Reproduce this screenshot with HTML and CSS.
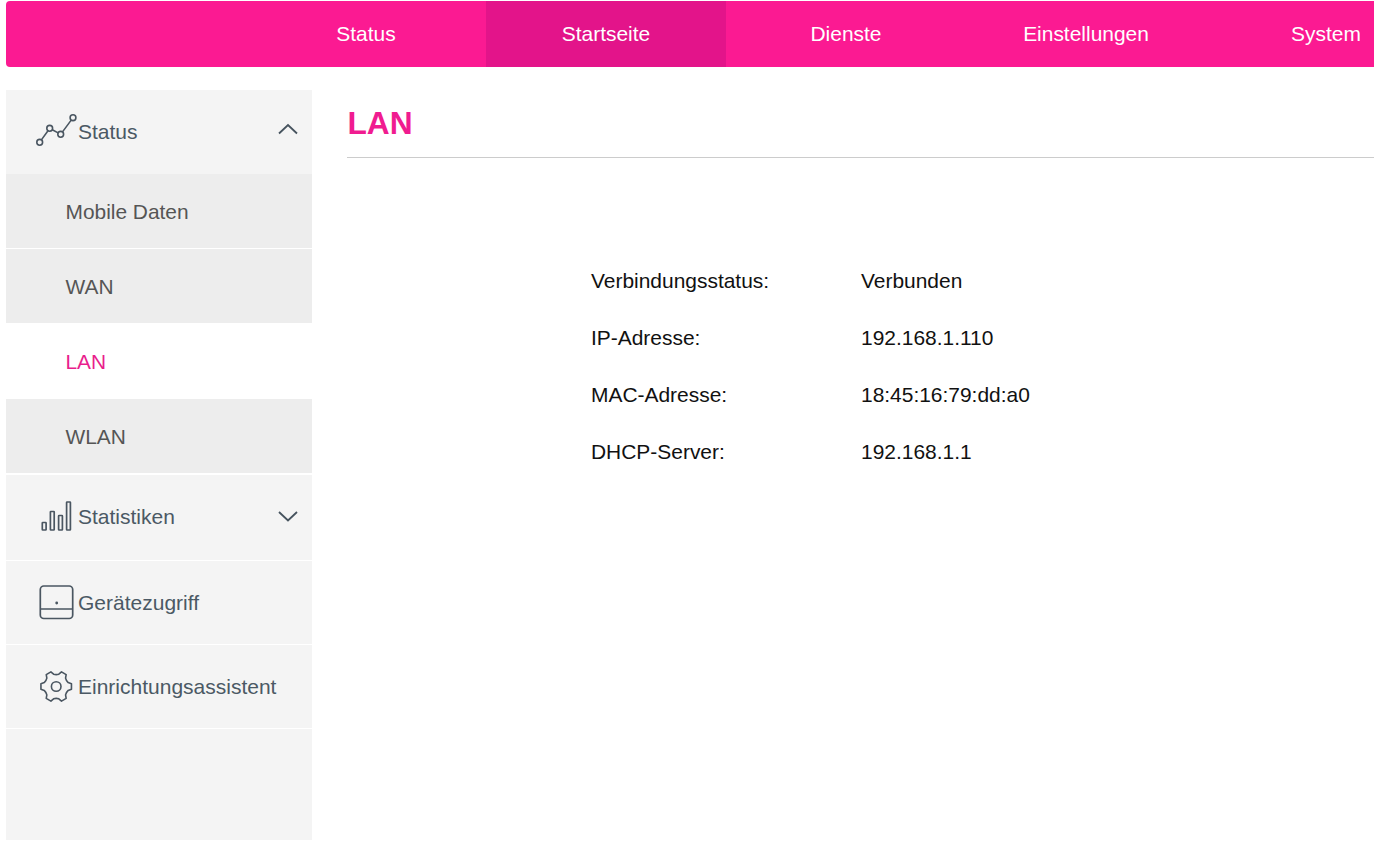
FILE: index.html
```html
<!DOCTYPE html>
<html lang="de">
<head>
<meta charset="utf-8">
<title>LAN</title>
<link rel="stylesheet" href="styles.css">
</head>
<body>
<div class="page">
  <header class="topbar">
    <nav class="topnav">
      <a class="topitem">Status</a>
      <a class="topitem active">Startseite</a>
      <a class="topitem">Dienste</a>
      <a class="topitem">Einstellungen</a>
      <a class="topitem">System</a>
    </nav>
  </header>
  <div class="body">
    <aside class="sidebar">
      <div class="group g-status">
        <svg class="ico" width="42" height="36" viewBox="0 0 42 36" fill="none" stroke="#4a5661" stroke-width="1.6">
          <circle cx="3.7" cy="28.3" r="2.9"/><circle cx="13.7" cy="14.3" r="2.9"/><circle cx="24.7" cy="20.3" r="2.9"/><circle cx="37" cy="3.7" r="2.9"/>
          <path d="M5.4 25.900 12 16.700M16.300 15.700 22.100 18.900M26.500 17.900 35.200 6.100"/>
        </svg>
        <span class="label">Status</span>
        <svg class="chev chev-up" width="22" height="12" viewBox="0 0 22 12" fill="none" stroke="#46535e" stroke-width="1.8"><path d="M2 10.500 11 2l9 8.500"/></svg>
      </div>
      <a class="sub s1">Mobile Daten</a>
      <a class="sub">WAN</a>
      <a class="sub current">LAN</a>
      <a class="sub s4">WLAN</a>
      <div class="group g-stat">
        <svg class="ico" width="42" height="36" viewBox="0 0 42 36" fill="none" stroke="#4a5661" stroke-width="1.7">
          <rect x="6.300" y="23.500" width="3.800" height="7.500" rx=".5"/><rect x="14.400" y="12.500" width="3.800" height="18.500" rx=".5"/><rect x="22.600" y="16.500" width="3.800" height="14.500" rx=".5"/><rect x="30.600" y="3" width="3.800" height="28" rx=".5"/>
        </svg>
        <span class="label">Statistiken</span>
        <svg class="chev chev-down" width="22" height="12" viewBox="0 0 22 12" fill="none" stroke="#46535e" stroke-width="1.8"><path d="M2 2l9 8.500L20 2"/></svg>
      </div>
      <div class="group g-dev">
        <svg class="ico" width="42" height="36" viewBox="0 0 42 36" fill="none" stroke="#4a5661" stroke-width="1.7">
          <rect x="4.300" y="1" width="32.400" height="32.500" rx="3.500"/><path d="M4.300 24h32.400"/><circle cx="20.700" cy="18" r="1.400" fill="#4a5661" stroke="none"/>
        </svg>
        <span class="label">Gerätezugriff</span>
      </div>
      <div class="group g-wiz">
        <svg class="ico" width="42" height="36" viewBox="-20.200 -17.500 42 36" fill="none" stroke="#4a5661" stroke-width="1.600" stroke-linejoin="round">
          <circle cx="0" cy="0" r="4.800"/>
          <path d="M11.980 -3.890L15.260 -2.690L15.260 2.690L11.980 3.890Q9.960 5.750 9.360 8.430L9.960 11.870L5.300 14.570L2.620 12.320Q0 11.500 -2.620 12.320L-5.300 14.570L-9.960 11.870L-9.360 8.430Q-9.960 5.750 -11.980 3.890L-15.260 2.690L-15.260 -2.690L-11.980 -3.890Q-9.960 -5.750 -9.360 -8.430L-9.960 -11.870L-5.300 -14.570L-2.620 -12.320Q0 -11.500 2.620 -12.320L5.300 -14.570L9.960 -11.870L9.360 -8.430Q9.960 -5.750 11.980 -3.890Z"/>
        </svg>
        <span class="label">Einrichtungsassistent</span>
      </div>
      <div class="filler"></div>
    </aside>
    <main class="main">
      <h1 class="title">LAN</h1>
      <div class="info">
        <div class="k">Verbindungsstatus:</div><div class="v">Verbunden</div>
        <div class="k">IP-Adresse:</div><div class="v">192.168.1.110</div>
        <div class="k">MAC-Adresse:</div><div class="v">18:45:16:79:dd:a0</div>
        <div class="k">DHCP-Server:</div><div class="v">192.168.1.1</div>
      </div>
    </main>
  </div>
</div>
</body>
</html>
```
FILE: styles.css
```css
* { box-sizing: border-box; }
html, body { margin: 0; height: 100%; overflow: hidden; background: #fff; }
body { font-family: "Liberation Sans", Arial, sans-serif; }
.page { width: 1374px; height: 845px; padding: 1px 0 0 6px; overflow: hidden; }
.topbar { height: 66px; background: #fb1a92; border-radius: 4px 0 0 4px; overflow: hidden; }
.topnav { display: flex; height: 100%; padding-left: 240px; }
.topitem { flex: 0 0 240px; display: flex; align-items: center; justify-content: center; color: #fff; font-size: 20.95px; }
.topitem.active { background: #e3148a; }
.body { display: flex; margin-top: 23px; height: 750px; }
.sidebar { width: 306px; display: flex; flex-direction: column; background: #f4f4f4; flex: none; }
.group { display: flex; align-items: center; padding-left: 30px; position: relative; background: #f4f4f4; color: #4b5964; font-size: 21px; border-bottom: 1px solid #fff; }
.g-status { height: 84px; border-bottom: 0; }
.g-stat { height: 86px; padding-bottom: 1px; }
.g-dev { height: 84px; }
.g-wiz { height: 84px; }
.ico { flex: none; }
.chev { position: absolute; left: 271px; }
.chev-up { top: 33px; }
.chev-down { top: 35px; }
.sub { display: flex; align-items: center; height: 75px; padding: 2px 0 0 59.5px; background: #ededed; color: #555; font-size: 20.9px; border-bottom: 1px solid #fff; }
.sub.current { background: #fff; color: #e91e8c; }
.sub.s4 { height: 76px; border-bottom-width: 2px; }
.filler { flex: 1; }
.main { flex: 1; padding-left: 35px; min-width: 0; }
.title { margin: 0; height: 68px; padding: 12px 0 0 0.5px; border-bottom: 1px solid #ccc; color: #f01c90; font-size: 31.7px; line-height: 43px; font-weight: 700; }
.info { display: grid; grid-template-columns: 270px 1fr; grid-auto-rows: 57px; margin: 94px 0 0 244px; font-size: 20.95px; color: #111; line-height: 57px; }
```
